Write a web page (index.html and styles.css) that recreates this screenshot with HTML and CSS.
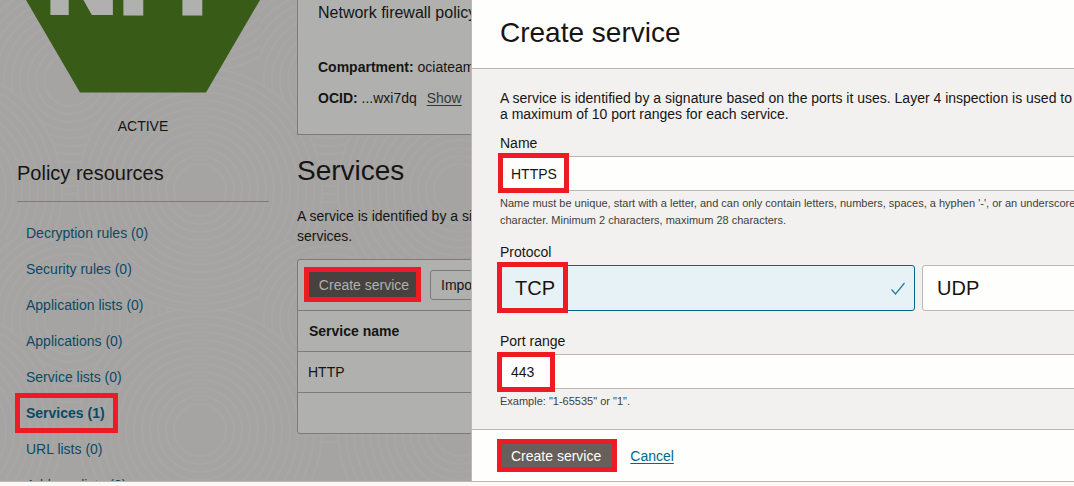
FILE: index.html
```html
<!DOCTYPE html>
<html lang="en">
<head>
<meta charset="utf-8">
<title>Create service</title>
<link rel="stylesheet" href="styles.css">
</head>
<body>
<div class="shell">
  <svg class="texture" aria-hidden="true">
    <defs>
      <pattern id="waves" width="260" height="240" patternUnits="userSpaceOnUse">
        <g id="ripple" fill="none" stroke="#a8a7a5" stroke-width="2">
          <circle cx="70" cy="80" r="122" fill="#a5a4a2"/><circle cx="70" cy="80" r="114"/><circle cx="70" cy="80" r="106"/><circle cx="70" cy="80" r="98"/><circle cx="70" cy="80" r="90"/><circle cx="70" cy="80" r="82"/><circle cx="70" cy="80" r="74"/><circle cx="70" cy="80" r="66"/><circle cx="70" cy="80" r="58"/><circle cx="70" cy="80" r="50"/><circle cx="70" cy="80" r="42"/><circle cx="70" cy="80" r="34"/><circle cx="70" cy="80" r="26"/>
        </g>
        <use href="#ripple" x="130" y="110"/>
        <use href="#ripple" x="-130" y="110"/>
        <use href="#ripple" x="130" y="-130"/>
      </pattern>
    </defs>
    <rect width="100%" height="100%" fill="url(#waves)"/>
  </svg>

  <aside class="sidebar">
    <svg class="badge" viewBox="17 0 252 93" role="img" aria-label="NFP">
      <polygon points="26,0 260,0 206,92.5 80,92.5" fill="#385b18"/>
      <text class="badge-text" x="47 120 179" y="12">NFP</text>
    </svg>
    <p class="status">ACTIVE</p>
    <h2 class="side-title">Policy resources</h2>
    <nav class="links">
      <a href="#">Decryption rules (0)</a>
      <a href="#">Security rules (0)</a>
      <a href="#">Application lists (0)</a>
      <a href="#">Applications (0)</a>
      <a href="#">Service lists (0)</a>
      <a href="#" class="current mark mark-nav">Services (1)</a>
      <a href="#">URL lists (0)</a>
      <a href="#">Address lists (0)</a>
    </nav>
  </aside>

  <main class="main">
    <section class="info">
      <p class="info-title">Network firewall policy</p>
      <p class="info-row"><b>Compartment:</b> ociateam</p>
      <p class="info-row"><b>OCID:</b> ...wxi7dq <a href="#" class="show">Show</a></p>
    </section>
    <h1 class="title">Services</h1>
    <p class="intro">A service is identified by a si<br>services.</p>
    <div class="panel">
      <div class="toolbar">
        <span class="mark mark-tool"><button class="btn btn-dim" type="button">Create service</button></span>
        <button class="btn btn-outline" type="button">Import</button>
      </div>
      <table class="table">
        <thead><tr><th>Service name</th></tr></thead>
        <tbody><tr><td>HTTP</td></tr></tbody>
      </table>
      <div class="panel-foot"></div>
    </div>
  </main>

  <section class="drawer">
    <header class="drawer-head"><h2 class="title">Create service</h2></header>
    <form class="form">
      <p class="about">A service is identified by a signature based on the ports it uses. Layer 4 inspection is used to<br>a maximum of 10 port ranges for each service.</p>
      <label class="label" for="name">Name</label>
      <div class="mark mark-name"><input class="input" id="name" type="text" value="HTTPS"></div>
      <p class="hint">Name must be unique, start with a letter, and can only contain letters, numbers, spaces, a hyphen '-', or an underscore<br>character. Minimum 2 characters, maximum 28 characters.</p>
      <fieldset class="protocol">
        <legend class="label">Protocol</legend>
        <div class="tiles">
          <label class="tile selected mark mark-tcp"><input type="radio" name="protocol" checked>TCP
            <svg class="tick" viewBox="0 0 16 16" aria-hidden="true"><path d="M1.500 9.500 5.500 14 14.500 3" fill="none" stroke="#227e9e" stroke-width="1.200"/></svg>
          </label>
          <label class="tile"><input type="radio" name="protocol">UDP</label>
        </div>
      </fieldset>
      <label class="label" for="port">Port range</label>
      <div class="mark mark-port"><input class="input" id="port" type="text" value="443"></div>
      <p class="hint">Example: "1-65535" or "1".</p>
    </form>
    <footer class="actions">
      <span class="mark mark-submit"><button class="btn btn-primary" type="button">Create service</button></span>
      <a href="#" class="cancel">Cancel</a>
    </footer>
  </section>
</div>
</body>
</html>
```
FILE: styles.css
```css
*, *::after { box-sizing: border-box; }

body {
  margin: 0;
  background: #fcf8f5;
  color: #161513;
  font: 14px/16px "Liberation Sans", Arial, sans-serif;
  overflow: hidden;
}

h1, h2, p { margin: 0; font-weight: 400; }

.shell {
  position: relative;
  display: grid;
  grid-template-columns: 297px 174px minmax(0, 1fr);
  height: calc(100vh - 4px);
  border-bottom: 1px solid #bfb6ae;
  background: #a5a4a2;
  overflow: hidden;
  white-space: nowrap;
}

.texture { position: absolute; inset: 0; width: 100%; height: 100%; }

.sidebar, .main, .drawer { position: relative; min-height: 0; }

/* red call-out frames */
.mark { position: relative; }
.mark::after {
  content: "";
  position: absolute;
  border: 5px solid #ed1c24;
  pointer-events: none;
}
.mark-nav::after { inset: -2px auto -2px -11px; width: 103px; }
.mark-tool::after { inset: -3px -2px -2px -5px; }
.mark-name::after { inset: -3px auto -2px -2px; width: 71px; }
.mark-tcp::after { inset: -4px auto -3px -4px; width: 71px; }
.mark-port::after { inset: -2px auto -3px -3px; width: 58px; }
.mark-submit::after { inset: -2px -5px -1px -3px; }

/* sidebar */
.sidebar { padding: 0 28px 0 17px; }
.badge { display: block; width: 100%; }
.badge-text {
  font: bold 96px "Liberation Sans", Arial, sans-serif;
  fill: #b0b0ae;
  stroke: #b0b0ae;
  stroke-width: 6px;
}
.status { margin-top: 25px; text-align: center; }
.side-title {
  margin-top: 27px;
  padding-bottom: 16px;
  border-bottom: 1px solid #7d7a77;
  font-size: 20px;
  line-height: 24px;
}
.links { display: flex; flex-direction: column; margin-top: 13px; padding-left: 9px; }
.links a { color: #0a4a64; line-height: 36px; text-decoration: none; }
.links .current { font-weight: 700; }

/* main column */
.main { overflow: hidden; }
.info {
  height: 135px;
  padding: 3px 20px 0;
  border: 1px solid #7d7a77;
  border-top: 0;
  border-right: 0;
  background: #b0b0ae;
}
.info-title { margin-bottom: 33px; font-size: 16px; line-height: 20px; }
.info-row { line-height: 22px; margin-bottom: 9px; }
.show { margin-left: 6px; color: #393735; text-underline-offset: 2px; }
.title { font-size: 28px; line-height: 32px; }
.main .title { margin-top: 20px; }
.intro { margin-top: 19px; line-height: 20px; }
.panel {
  width: 400px;
  margin-top: 13px;
  border: 1px solid #7d7a77;
  border-radius: 3px;
  background: #b0b0ae;
}
.toolbar { display: flex; gap: 11px; padding: 10px 11px; border-bottom: 1px solid #7d7a77; }
.btn {
  height: 30px;
  padding: 0 10px;
  border: 1px solid transparent;
  border-radius: 3px;
  font: inherit;
}
.btn-dim { width: 110px; padding: 0; background: #474240; color: #b0b0ae; }
.btn-outline { border-color: #7d7a77; background: transparent; color: #161513; }
.mark-tool { display: flex; }
.table { width: 100%; border-spacing: 0; }
.table th, .table td {
  height: 41px;
  padding: 0 11px;
  border-bottom: 1px solid #7d7a77;
  text-align: left;
}
.table td { padding-left: 10px; }
.panel-foot { height: 40px; }

/* drawer */
.drawer {
  display: flex;
  flex-direction: column;
  border-left: 1px solid #bcb8b4;
  background: #f3f1f0;
  overflow: hidden;
}
.drawer-head {
  height: 69px;
  padding: 17px 28px 0;
  border-bottom: 1px solid #bfb6ae;
  background: #fefefc;
}
.form { flex: 1; margin-right: -263px; padding: 21px 0 0 28px; }
.about { margin-bottom: 13px; }
.label { display: block; padding: 0; margin-bottom: 5px; }
.input {
  display: block;
  width: 100%;
  height: 35px;
  padding: 0 10px;
  border: 1px solid #bcb6b1;
  border-radius: 2px;
  background: #fefefc;
  color: #161513;
  font: inherit;
}
.hint { margin-top: 4px; color: #403e3b; font-size: 11px; line-height: 17px; }
.protocol { margin: 15px 0 22px; padding: 0; border: 0; }
.tiles { display: grid; grid-template-columns: 1fr 1fr; gap: 7px; }
.tile {
  display: flex;
  align-items: center;
  height: 46px;
  padding: 0 8px 0 14px;
  border: 1px solid #bcb6b1;
  border-radius: 3px;
  background: #fefefc;
  font-size: 20px;
}
.tile input { appearance: none; width: 0; height: 0; margin: 0; }
.tile.selected { border-color: #00688c; background: #e6f2f5; }
.tick { width: 16px; height: 16px; margin-left: auto; }
.actions {
  display: flex;
  align-items: center;
  height: 52px;
  padding: 0 28px;
  border-top: 1px solid #bcb6b1;
  background: #fefefc;
}
.mark-submit { display: flex; margin-right: 18px; }
.btn-primary { background: #665f5b; color: #fefefc; }
.cancel { color: #00688c; text-underline-offset: 2px; }
```
